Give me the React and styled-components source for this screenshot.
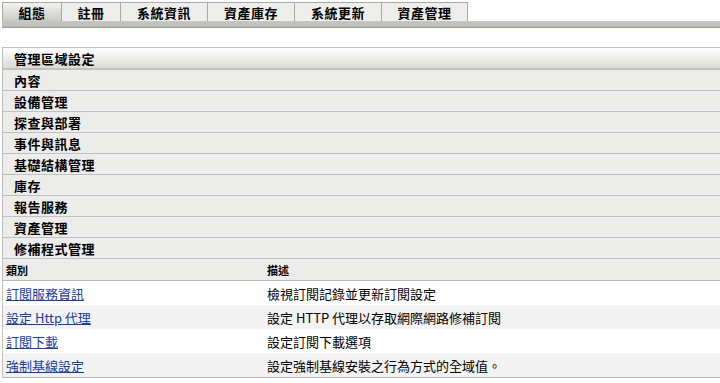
import React from "react";
import styled, { createGlobalStyle } from "styled-components";

const Global = createGlobalStyle`
  html, body { margin: 0; padding: 0; background: #fff; overflow: hidden; }
  body { font-family: "Noto Sans CJK TC", "Noto Sans CJK SC", "Liberation Sans", sans-serif; color: #000; }
`;

const Page = styled.div`
  padding: 2px 0 0 2px;
`;

const TabBar = styled.div`
  display: flex;
  flex-direction: column;
`;

const TabRow = styled.div`
  display: flex;
  height: 19px;
`;

const Tab = styled.div`
  box-sizing: border-box;
  width: ${(p) => p.$w}px;
  height: 19px;
  border: 1px solid #a8a8a4;
  border-bottom: none;
  margin-left: -1px;
  &:first-child { margin-left: 0; }
  background: ${(p) =>
    p.$active ? "linear-gradient(#f2f2f0, #c9c9c5)" : "#eeeeec"};
  display: flex;
  align-items: center;
  justify-content: center;
  font-size: 13px;
  font-weight: bold;
  letter-spacing: 0.5px;
  line-height: 1;
`;

const Strip = styled.div`
  height: 6px;
  background: linear-gradient(#c6c6c2, #babab6);
  border-bottom: 1px solid #9e9e98;
`;

const Panel = styled.div`
  margin-top: 19px;
  border-top: 1px solid #c0c0c0;
  border-left: 1px solid #c0c0c0;
`;

const PanelHeader = styled.div`
  height: 20px;
  background: linear-gradient(#ffffff, #dadad7);
  border-bottom: 2px solid #c0c0bc;
  display: flex;
  align-items: center;
  padding-left: 11px;
  font-size: 13px;
  font-weight: bold;
  letter-spacing: 0.5px;
`;

const Section = styled.div`
  height: 20px;
  background: #ececea;
  border-bottom: 1px solid #c0c0c0;
  display: flex;
  align-items: center;
  padding-left: 11px;
  font-size: 13px;
  font-weight: bold;
  letter-spacing: 0.5px;
`;

const Grid = styled.div`
  display: grid;
  grid-template-columns: 261px 1fr;
`;

const HeadCell = styled.div`
  height: 21px;
  background: #ececea;
  border-bottom: 1px solid #b8b8b8;
  display: flex;
  align-items: center;
  padding-left: 3px;
  font-size: 11px;
  font-weight: bold;
`;

const Cell = styled.div`
  height: 24px;
  background: ${(p) => (p.$alt ? "#f3f3f3" : "#ffffff")};
  border-bottom: ${(p) => (p.$last ? "1px solid #b8b8b8" : "none")};
  display: flex;
  align-items: center;
  padding-left: 3px;
  font-size: 13px;
  white-space: nowrap;
`;

const Link = styled.a`
  color: #1a3d9c;
  text-decoration: underline;
`;

const tabs = [
  ["組態", 60, true],
  ["註冊", 60],
  ["系統資訊", 88],
  ["資產庫存", 88],
  ["系統更新", 88],
  ["資產管理", 87],
];

const sections = [
  "內容",
  "設備管理",
  "探查與部署",
  "事件與訊息",
  "基礎結構管理",
  "庫存",
  "報告服務",
  "資產管理",
  "修補程式管理",
];

const rows = [
  ["訂閱服務資訊", "檢視訂閱記錄並更新訂閱設定"],
  ["設定 Http 代理", "設定 HTTP 代理以存取網際網路修補訂閱"],
  ["訂閱下載", "設定訂閱下載選項"],
  ["強制基線設定", "設定強制基線安裝之行為方式的全域值。"],
];

export default function App() {
  return (
    <Page>
      <Global />
      <TabBar>
        <TabRow>
          {tabs.map(([t, w, a]) => (
            <Tab key={t} $w={w} $active={a}>
              {t}
            </Tab>
          ))}
        </TabRow>
        <Strip />
      </TabBar>
      <Panel>
        <PanelHeader>管理區域設定</PanelHeader>
        {sections.map((s) => (
          <Section key={s}>{s}</Section>
        ))}
        <Grid>
          <HeadCell>類別</HeadCell>
          <HeadCell>描述</HeadCell>
          {rows.map(([a, b], i) => (
            <React.Fragment key={a}>
              <Cell $alt={i % 2 === 1} $last={i === rows.length - 1}>
                <Link href="#">{a}</Link>
              </Cell>
              <Cell $alt={i % 2 === 1} $last={i === rows.length - 1}>
                {b}
              </Cell>
            </React.Fragment>
          ))}
        </Grid>
      </Panel>
    </Page>
  );
}
